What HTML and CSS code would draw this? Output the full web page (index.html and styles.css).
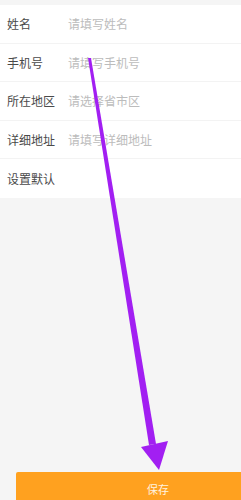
FILE: index.html
```html
<!DOCTYPE html>
<html lang="zh-CN">
<head>
    <meta charset="UTF-8">
    <meta name="viewport" content="width=device-width, initial-scale=1.0">
    <title>新增地址</title>
    <link rel="stylesheet" href="styles.css">
</head>
<body>
    <div class="page">
        <div class="form">
            <div class="form-row">
                <span class="form-label">姓名</span>
                <span class="form-input">请填写姓名</span>
            </div>
            <div class="form-row">
                <span class="form-label">手机号</span>
                <span class="form-input">请填写手机号</span>
            </div>
            <div class="form-row">
                <span class="form-label">所在地区</span>
                <span class="form-input">请选择省市区</span>
            </div>
            <div class="form-row">
                <span class="form-label">详细地址</span>
                <span class="form-input">请填写详细地址</span>
            </div>
            <div class="form-row">
                <span class="form-label">设置默认</span>
            </div>
        </div>
        <div class="footer">
            <a href="#" class="btn-save">保存</a>
        </div>

        <!-- 标注箭头 -->
        <svg class="arrow" width="241" height="500" viewBox="0 0 241 500">
            <polygon points="88,58 91,58 156,444 149,445" fill="#a21ff2"/>
            <polygon points="141,447 168,441 159,470" fill="#a21ff2"/>
        </svg>
    </div>
</body>
</html>
```

FILE: styles.css
```css
* {
    margin: 0;
    padding: 0;
    box-sizing: border-box;
}
body {
    background-color: #f5f5f5;
    font-family: "Noto Sans CJK SC", "Noto Sans", sans-serif;
}
.page {
    width: 241px;
    height: 500px;
    position: relative;
    overflow: hidden;
    padding-top: 5px;
}
.form {
    background-color: #fff;
}
.form-row {
    height: 38.5px;
    display: flex;
    align-items: center;
    padding-left: 7px;
    border-bottom: 1px solid #f3f3f3;
    font-size: 12px;
}
.form-row:last-child {
    border-bottom: none;
}
.form-label {
    width: 61px;
    color: #4a4a4a;
}
.form-input {
    color: #bcbcbc;
}

.footer {
    margin-top: 274px;
    padding-left: 16px;
}
.btn-save {
    display: flex;
    align-items: center;
    justify-content: center;
    width: 284px;
    height: 34px;
    background-color: #ffa11f;
    color: #fff3e0;
    font-size: 11px;
    text-decoration: none;
    border-radius: 2px;
}

.arrow {
    position: absolute;
    top: 0;
    left: 0;
    pointer-events: none;
}
```
